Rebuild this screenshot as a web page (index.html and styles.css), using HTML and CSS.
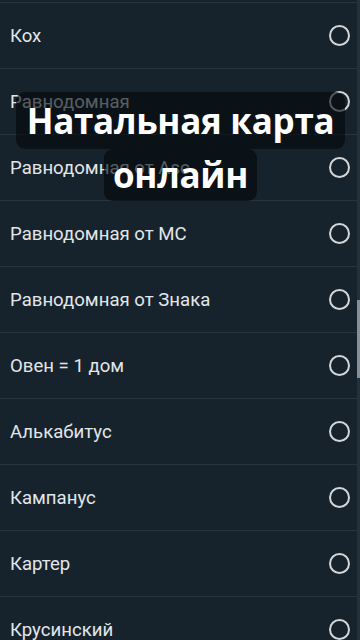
FILE: index.html
```html
<!DOCTYPE html>
<html lang="ru">
<head>
<meta charset="utf-8">
<meta name="viewport" content="width=360, initial-scale=1">
<link rel="stylesheet" href="styles.css">
<title>Система домов</title>
</head>
<body>
<div class="screen">
  <ul class="list">
    <li class="row"><span class="label">Кох</span><span class="radio"></span></li>
    <li class="row"><span class="label">Равнодомная</span><span class="radio"></span></li>
    <li class="row"><span class="label">Равнодомная от Asc</span><span class="radio"></span></li>
    <li class="row"><span class="label">Равнодомная от МС</span><span class="radio"></span></li>
    <li class="row"><span class="label">Равнодомная от Знака</span><span class="radio"></span></li>
    <li class="row"><span class="label">Овен = 1 дом</span><span class="radio"></span></li>
    <li class="row"><span class="label">Алькабитус</span><span class="radio"></span></li>
    <li class="row"><span class="label">Кампанус</span><span class="radio"></span></li>
    <li class="row"><span class="label">Картер</span><span class="radio"></span></li>
    <li class="row"><span class="label">Крусинский</span><span class="radio"></span></li>
  </ul>
  <div class="scrolltrack"><div class="scrollthumb"></div></div>
  <div class="caption">
    <span class="cap-line cap-line1">Натальная карта</span>
    <span class="cap-line cap-line2">онлайн</span>
  </div>
</div>
</body>
</html>
```
FILE: styles.css
```css
html, body {
  margin: 0;
  padding: 0;
  background: #17232c;
}
.screen {
  position: relative;
  width: 360px;
  height: 640px;
  overflow: hidden;
  background: #17232c;
  font-family: Roboto, "Noto Sans", sans-serif;
}
.list {
  list-style: none;
  margin: 0;
  padding: 2px 3px 0 0;
  border-top: 1px solid transparent;
}
.list::before {
  content: "";
  display: block;
  height: 1px;
  background: #28353d;
  margin-top: -1px;
}
.row {
  display: flex;
  align-items: center;
  justify-content: space-between;
  height: 65px;
  border-bottom: 1px solid #28353d;
  padding: 0 7px 0 10px;
}
.label {
  color: #e2e6e9;
  font-size: 18.6px;
}
.radio {
  width: 17px;
  height: 17px;
  border: 2px solid #d3d7da;
  border-radius: 50%;
  flex: none;
}
.scrolltrack {
  position: absolute;
  top: 0;
  right: 0;
  width: 3px;
  height: 640px;
  background: #24313a;
}
.scrollthumb {
  margin-top: 300px;
  width: 3px;
  height: 78px;
  background: #868f95;
}
.caption {
  position: absolute;
  top: 92px;
  left: 0;
  width: 361px;
  display: flex;
  flex-direction: column;
  align-items: center;
  font-family: "Open Sans", sans-serif;
  font-weight: 700;
  color: #ffffff;
}
.cap-line {
  display: block;
  background: rgba(4, 8, 11, 0.62);
  border-radius: 9px;
  font-size: 35px;
  letter-spacing: -0.3px;
}
.cap-line1 {
  line-height: 52px;
  padding: 3px 11px 2px;
}
.cap-line2 {
  line-height: 52px;
  padding: 0 9px;
}
```
